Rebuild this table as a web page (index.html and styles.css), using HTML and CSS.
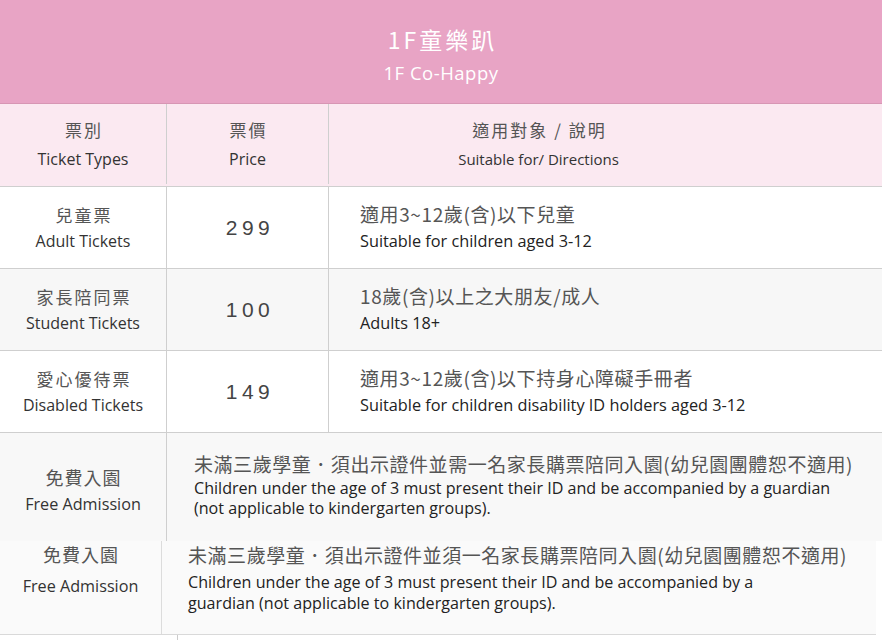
FILE: index.html
```html
<!DOCTYPE html>
<html lang="zh-Hant">
<head>
<meta charset="utf-8">
<title>1F童樂趴</title>
<link rel="stylesheet" href="styles.css">
</head>
<body>
<div class="page">
  <header class="banner">
    <div class="banner-title">1F童樂趴</div>
    <div class="banner-sub">1F Co-Happy</div>
  </header>

  <div class="grid head-row">
    <div class="cell center"><div class="zh">票別</div><div class="en">Ticket Types</div></div>
    <div class="cell center"><div class="zh">票價</div><div class="en">Price</div></div>
    <div class="cell center last head-desc"><div class="zh">適用對象 / 說明</div><div class="en en-sm">Suitable for/ Directions</div></div>
  </div>

  <div class="grid row white">
    <div class="cell center"><div class="zh">兒童票</div><div class="en">Adult Tickets</div></div>
    <div class="cell center price">299</div>
    <div class="cell desc last"><div class="dzh">適用3~12歲(含)以下兒童</div><div class="den">Suitable for children aged 3-12</div></div>
  </div>

  <div class="grid row grey">
    <div class="cell center"><div class="zh">家長陪同票</div><div class="en">Student Tickets</div></div>
    <div class="cell center price">100</div>
    <div class="cell desc last"><div class="dzh">18歲(含)以上之大朋友/成人</div><div class="den">Adults 18+</div></div>
  </div>

  <div class="grid row white">
    <div class="cell center"><div class="zh">愛心優待票</div><div class="en">Disabled Tickets</div></div>
    <div class="cell center price">149</div>
    <div class="cell desc last"><div class="dzh">適用3~12歲(含)以下持身心障礙手冊者</div><div class="den">Suitable for children disability ID holders aged 3-12</div></div>
  </div>

  <div class="free">
    <div class="cell center free-left"><div class="zh fzh">免費入園</div><div class="en fen-l">Free Admission</div></div>
    <div class="cell free-right">
      <div class="dzh bzh">未滿三歲學童．須出示證件並需一名家長購票陪同入園(幼兒園團體恕不適用)</div>
      <div class="fen">Children under the age of 3 must present their ID and be accompanied by a guardian<br>(not applicable to kindergarten groups).</div>
    </div>
  </div>

  <div class="free2">
    <div class="cell center free2-left"><div class="zh fzh">免費入園</div><div class="en en2">Free Admission</div></div>
    <div class="cell free2-right">
      <div class="dzh bzh">未滿三歲學童．須出示證件並須一名家長購票陪同入園(幼兒園團體恕不適用)</div>
      <div class="fen2">Children under the age of 3 must present their ID and be accompanied by a<br>guardian (not applicable to kindergarten groups).</div>
    </div>
  </div>

  <div class="tail"><div class="tail-left"></div><div class="tail-right"></div></div>
</div>
</body>
</html>
```
FILE: styles.css
```css
* { box-sizing: border-box; }
html, body { margin: 0; padding: 0; background: #fff; }
body {
  font-family: "Open Sans", "Noto Sans CJK TC", sans-serif;
  color: #444;
  width: 882px;
  height: 640px;
  overflow: hidden;
}
.page { width: 882px; }

.banner {
  height: 104px;
  background: #e8a4c5;
  border-bottom: 1px solid #d796b4;
  color: #fff;
  text-align: center;
  padding-top: 23px;
}
.banner-title {
  font-size: 23px;
  letter-spacing: 3px;
  line-height: 32px;
  font-family: "Noto Sans CJK TC", sans-serif;
  padding-left: 3px;
}
.banner-sub {
  font-size: 18.5px;
  line-height: 26px;
  margin-top: 5px;
  letter-spacing: 0.5px;
}

.grid {
  display: grid;
  grid-template-columns: 167px 162px 1fr;
  border-bottom: 1px solid #cfcfcf;
}
.head-row { background: #fbe9f1; height: 83px; padding-bottom: 2px; }
.row { height: 82px; }
.white { background: #fff; }
.grey { background: #f7f7f7; }

.cell {
  border-right: 1px solid #cfcfcf;
  display: flex;
  flex-direction: column;
  justify-content: center;
}
.cell.last { border-right: none; }
.center { align-items: center; text-align: center; }
.head-desc { padding-right: 134px; }

.zh {
  font-family: "Noto Sans CJK TC", sans-serif;
  font-size: 17px;
  line-height: 24px;
  letter-spacing: 2px;
  padding-left: 2px;
  color: #555;
}
.en {
  font-size: 16px;
  line-height: 22px;
  margin-top: 6px;
  color: #333;
}
.en-sm { font-size: 15px; }
.row .en { margin-top: 3px; }

.price {
  font-family: "Liberation Sans", Arial, sans-serif;
  font-size: 21px;
  letter-spacing: 4.5px;
  color: #444;
  padding-left: 5px;
}

.desc { padding-left: 31px; padding-bottom: 2px; }
.dzh {
  font-family: "Noto Sans CJK TC", sans-serif;
  font-size: 19px;
  line-height: 26px;
  color: #555;
  letter-spacing: 0.6px;
}
.den {
  font-size: 16.3px;
  line-height: 22px;
  margin-top: 3px;
  color: #222;
}

.free {
  display: grid;
  grid-template-columns: 167px 1fr;
  background: #f8f8f8;
  height: 108px;
}
.fzh { font-size: 18px; letter-spacing: 1px; padding-left: 1px; }
.free-left { padding-top: 6px; }
.free-left .fen-l { margin-top: 4px; font-size: 16.2px; }
.free-right {
  border-right: none;
  padding-left: 27px;
  padding-bottom: 6px;
}
.bzh { letter-spacing: 0.55px; }
.fen {
  font-size: 16.1px;
  line-height: 20px;
  color: #222;
  margin-top: 1px;
}

.free2 {
  display: grid;
  grid-template-columns: 162px 1fr;
  width: 876px;
  background: #fafafa;
  height: 94px;
  border-bottom: 1px solid #d9d9d9;
}
.free2-left {
  border-right: 1px solid #dcdcdc;
  justify-content: flex-start;
  padding-top: 1px;
}
.en2 { margin-top: 9px; font-size: 16.2px; }
.free2-right {
  border-right: none;
  justify-content: flex-start;
  padding-left: 26px;
  padding-top: 1px;
}
.fen2 {
  font-size: 16.1px;
  line-height: 21px;
  color: #222;
  margin-top: 4px;
}

.tail { display: flex; height: 10px; }
.tail-left { width: 178px; border-right: 1px solid #ccc; }
```
